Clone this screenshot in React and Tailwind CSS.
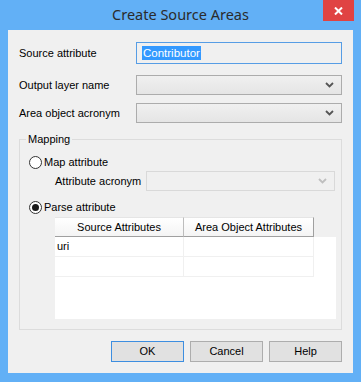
import React from "react";

const Chevron = ({ color = "#555" }) => (
  <svg width="9" height="6" viewBox="0 0 9 6" className="block">
    <path d="M1 1 L4.5 4.5 L8 1" fill="none" stroke={color} strokeWidth="1.8" />
  </svg>
);

const Combo = ({ className = "", disabled = false }) => (
  <div
    className={
      "flex items-center justify-end pr-[7px] border " +
      (disabled
        ? "border-[#d9d9d9] bg-[#f0f0f0] "
        : "border-[#acacac] bg-gradient-to-b from-[#f0f0f0] to-[#e5e5e5] ") +
      className
    }
  >
    <Chevron color={disabled ? "#bfbfbf" : "#555"} />
  </div>
);

const Radio = ({ checked }) => (
  <div className="w-[13px] h-[13px] rounded-full border border-[#333] bg-white flex items-center justify-center shrink-0">
    {checked && <div className="w-[7px] h-[7px] rounded-full bg-[#1a1a1a]" />}
  </div>
);

const Btn = ({ children, primary }) => (
  <div
    className={
      "w-[73px] h-[21px] flex items-center justify-center bg-[#e1e1e1] border " +
      (primary ? "border-[#3d8ee0]" : "border-[#adadad]")
    }
  >
    {children}
  </div>
);

export default function App() {
  return (
    <div className="w-[361px] h-[382px] bg-[#62b0f6] relative font-['Liberation_Sans',Arial,sans-serif] text-[11px] text-black leading-[15px]">
      <div className="h-[30px] flex items-center justify-center text-[14.5px] text-[#2b2b2b] font-['Noto_Sans',sans-serif] pb-[1px]">
        Create Source Areas
      </div>
      <div className="absolute top-0 left-[323px] w-[31px] h-[21px] bg-[#e04343] flex items-center justify-center">
        <svg width="9" height="8" viewBox="0 0 9 8">
          <path d="M1 0.5 L8 7.5 M8 0.5 L1 7.5" stroke="white" strokeWidth="2" />
        </svg>
      </div>
      <div className="ml-[8px] w-[345px] h-[343px] bg-[#f0f0f0] px-[11px] pt-[12px] flex flex-col">
        <div className="flex items-center h-[22px]">
          <div className="w-[117px]">Source attribute</div>
          <div className="w-[206px] h-[22px] border border-[#569de5] bg-[#f0f0f0] flex items-center pl-[5px]">
            <span className="bg-[#3399ff] text-white px-[1px] leading-[14px] text-[11.5px]">Contributor</span>
          </div>
        </div>
        <div className="flex items-center h-[20px] mt-[11px]">
          <div className="w-[117px]">Output layer name</div>
          <Combo className="w-[206px] h-[20px]" />
        </div>
        <div className="flex items-center h-[20px] mt-[8px]">
          <div className="w-[117px]">Area object acronym</div>
          <Combo className="w-[206px] h-[20px]" />
        </div>
        <div className="relative mt-[16px] h-[191px] border border-[#dcdcdc] flex flex-col">
          <div className="absolute left-[6px] top-[-8px] px-[2px] bg-[#f0f0f0] leading-[15px]">Mapping</div>
          <div className="flex items-center gap-[2px] h-[16px] mt-[14px] ml-[9px]">
            <Radio />
            <span>Map attribute</span>
          </div>
          <div className="flex items-center h-[20px] mt-[1px] ml-[35px]">
            <div className="w-[91px]">Attribute acronym</div>
            <Combo disabled className="w-[189px] h-[20px]" />
          </div>
          <div className="flex items-center gap-[2px] h-[16px] mt-[8px] ml-[9px]">
            <Radio checked />
            <span>Parse attribute</span>
          </div>
          <div className="ml-[35px] mr-[5px] mt-[2px] h-[102px] bg-white flex flex-col">
            <div className="flex h-[20px] bg-[#f0f0f0]">
              <div className="w-[129px] h-[20px] flex items-center justify-center bg-gradient-to-b from-[#ffffff] to-[#f4f4f4] border-t border-[#e5e5e5] border-r border-r-[#bdbdbd] border-b border-b-[#a0a0a0]">
                Source Attributes
              </div>
              <div className="w-[130px] h-[20px] flex items-center justify-center bg-gradient-to-b from-[#ffffff] to-[#f4f4f4] border-t border-[#e5e5e5] border-r border-r-[#a0a0a0] border-b border-b-[#a0a0a0]">
                Area Object Attributes
              </div>
              <div className="flex-1" />
            </div>
            <div className="flex h-[20px]">
              <div className="w-[129px] border-r border-b border-[#f0f0f0] flex items-center pl-[2px]">uri</div>
              <div className="w-[130px] border-r border-b border-[#f0f0f0]" />
            </div>
            <div className="flex h-[20px]">
              <div className="w-[129px] border-r border-b border-[#f0f0f0]" />
              <div className="w-[130px] border-r border-b border-[#f0f0f0]" />
            </div>
          </div>
        </div>
        <div className="flex justify-end gap-[6px] mt-[11px]">
          <Btn primary>OK</Btn>
          <Btn>Cancel</Btn>
          <Btn>Help</Btn>
        </div>
      </div>
    </div>
  );
}
